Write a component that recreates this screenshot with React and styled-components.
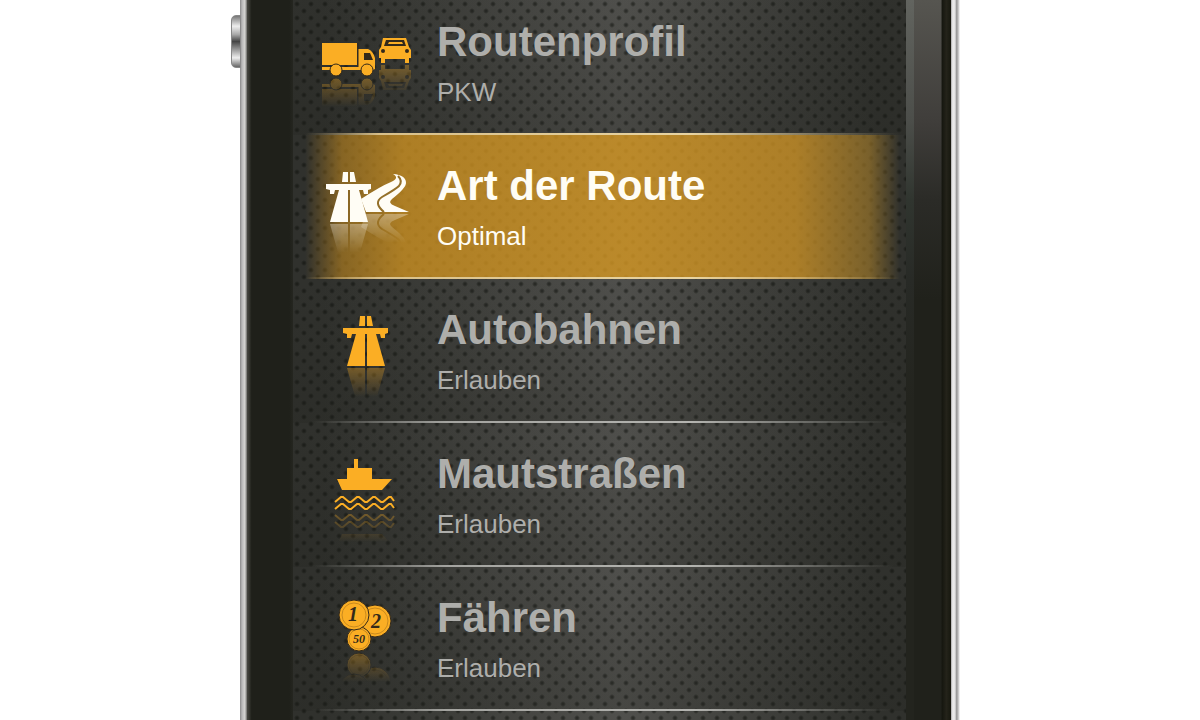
import React from "react";
import styled, { createGlobalStyle } from "styled-components";

const ORANGE = "#fbae24";
const DARK = "#33291a";

const Truck = () => (
	<g fill={ORANGE}>
		<path d="M1 20h35v22H1zM1 44h36V26h10q5 2 7 9v11l-2 1H1z" />
		<path d="M37 20v24" stroke={DARK} strokeWidth="1" />
		<path d="M43 30h6l3 7h-9z" fill={DARK} />
		<circle cx="15" cy="47" r="6" stroke={DARK} />
		<circle cx="46" cy="47" r="6" stroke={DARK} />
	</g>
);

const Car = () => (
	<g fill={ORANGE}>
		<path d="M62 15h23l3 9 2 3v8h-2v5h-4v-4H64v4h-4v-5h-2v-8l2-3z" />
		<path d="M65 17h18l2 6H63z" fill={DARK} />
		<path d="M68 19h13l1 2H67z" />
		<circle cx="62" cy="28" r="2" fill={DARK} />
		<circle cx="86" cy="28" r="2" fill={DARK} />
	</g>
);

const Motorway = () => (
	<>
		<path d="M17 0h5v10h-6zM24 0h4l2 10h-6z" />
		<path d="M0 12h45v5l-3 1v4h-4l-1-4H9l-1 4H4v-4l-4-1z" />
		<path d="M13 18h9v32H4zM24 18h9l9 32H24z" />
	</>
);

const WhiteMotorway = () => (
	<g fill="#fffdf5" transform="translate(5 5)">
		<Motorway />
	</g>
);

const OrangeMotorway = () => (
	<g fill={ORANGE} transform="translate(22 5)">
		<Motorway />
	</g>
);

const CountryRoad = () => (
	<>
		<path d="M72 7q13 1 13 9 0 5-14 16-5 4 3 7l14 6H45l-5-13q20-13 30-17 9-4 2-8z" fill="#fffdf5" />
		<path d="M77 9q5 5 1 10-3 3-17 11-9 6 2 15" fill="none" stroke="#94702a" strokeWidth="2" />
	</>
);

const Ship = () => (
	<g fill={ORANGE}>
		<path d="M26 24V13h7V4h4v9h14v11h20L61 35H21l-5-11z" />
		<path
			d="M14 47l6-5h2l6 5h2l6-5h2l6 5h2l6-5h2l6 5h2l6-5h2l3 4M14 54l6-5h2l6 5h2l6-5h2l6 5h2l6-5h2l6 5h2l6-5h2l3 4"
			fill="none"
			stroke={ORANGE}
			strokeWidth="2"
		/>
	</g>
);

const Coins = ({ mirrored }) => (
	<g
		fill={ORANGE}
		stroke={DARK}
		fontFamily="Liberation Serif, serif"
		fontStyle="italic"
		fontWeight="bold"
		textAnchor="middle"
	>
		<circle cx="54" cy="22" r="16" />
		<circle cx="54" cy="22" r="13" fill="none" stroke="#c98a1e" />
		<circle cx="38" cy="40" r="12" />
		<circle cx="38" cy="40" r="10" fill="none" stroke="#c98a1e" />
		<circle cx="33" cy="16" r="15" />
		<circle cx="33" cy="16" r="12" fill="none" stroke="#c98a1e" />
		{!mirrored && (
			<g fill={DARK} stroke="none">
				<text x="32" y="22" fontSize="20">1</text>
				<text x="55" y="29" fontSize="20">2</text>
				<text x="38" y="44" fontSize="12">50</text>
			</g>
		)}
	</g>
);

// base is the ground line of a drawing, its reflection starts there
const ITEMS = [
	{
		id: "profile",
		title: "Routenprofil",
		value: "PKW",
		parts: [
			{ draw: Truck, base: 54 },
			{ draw: Car, base: 41 },
		],
	},
	{
		id: "type",
		title: "Art der Route",
		value: "Optimal",
		parts: [
			{ draw: CountryRoad, base: 46 },
			{ draw: WhiteMotorway, base: 56 },
		],
	},
	{ id: "motorways", title: "Autobahnen", value: "Erlauben", parts: [{ draw: OrangeMotorway, base: 56 }] },
	{ id: "tolls", title: "Mautstraßen", value: "Erlauben", parts: [{ draw: Ship, base: 57 }] },
	{ id: "ferries", title: "Fähren", value: "Erlauben", parts: [{ draw: Coins, base: 53 }] },
];

const IconPart = ({ id, draw: Drawing, base }) => (
	<>
		<defs>
			<linearGradient id={`fade-${id}`} gradientUnits="userSpaceOnUse" x1="0" y1={base} x2="0" y2={base + 30}>
				<stop offset="0" stopColor="#fff" stopOpacity="0.35" />
				<stop offset="1" stopColor="#fff" stopOpacity="0" />
			</linearGradient>
			<mask id={`mirror-${id}`} maskUnits="userSpaceOnUse" x="0" y="0" width="92" height="96">
				<rect y={base} width="92" height="34" fill={`url(#fade-${id})`} />
			</mask>
		</defs>
		<g mask={`url(#mirror-${id})`}>
			<g transform={`translate(0 ${base * 2}) scale(1 -1)`}>
				<Drawing mirrored />
			</g>
		</g>
		<Drawing />
	</>
);

const App = () => {
	const [active, setActive] = React.useState("type");
	const activeIndex = ITEMS.findIndex((item) => item.id === active);
	return (
		<Page>
			<GlobalStyle />
			<Phone>
				<VolumeButton />
				<LeftRim />
				<LeftBezel />
				<Screen>
					<Menu>
						{ITEMS.map((item, index) => (
							<li key={item.id}>
								<Row
									$active={index === activeIndex}
									$brightLine={index === activeIndex || index === activeIndex - 1}
									onClick={() => setActive(item.id)}
								>
									<Icon viewBox="0 0 92 96" aria-hidden="true">
										{item.parts.map((part, i) => (
											<IconPart key={i} id={`${item.id}-${i}`} draw={part.draw} base={part.base} />
										))}
									</Icon>
									<Labels>
										<Title>{item.title}</Title>
										<Value>{item.value}</Value>
									</Labels>
								</Row>
							</li>
						))}
					</Menu>
				</Screen>
				<RightBezel />
				<RightRim />
			</Phone>
		</Page>
	);
};

const GlobalStyle = createGlobalStyle`
	* {
		box-sizing: border-box;
	}
	body {
		margin: 0;
		background: #fff;
		font-family: "Liberation Sans", Arial, sans-serif;
	}
`;

const Page = styled.main`
	height: 100vh;
	overflow: hidden;
`;

const Phone = styled.div`
	position: relative;
	display: grid;
	grid-template-columns: 8px 45px 1fr 45px 9px;
	width: 60%;
	min-width: 600px;
	height: 100%;
	margin: 0 auto;
`;

const VolumeButton = styled.div`
	position: absolute;
	top: 15px;
	left: -9px;
	width: 10px;
	height: 53px;
	border: 1px solid #888;
	border-radius: 5px 0 0 5px;
	background: linear-gradient(#777, #eee 20%, #aaa 36%, #444 50%, #999 66%, #eee 82%, #666);
`;

const LeftRim = styled.div`
	background: linear-gradient(90deg, #888, #b8b8b8 25%, #d5d5d2 60%, #8a8a86 80%, #22231d);
`;

const LeftBezel = styled.div`
	background: linear-gradient(90deg, #41423b, #1f201a 8%, #1f201a 92%, #252620);
`;

const RightBezel = styled.div`
	background:
		linear-gradient(90deg, transparent 78%, #15160f 80%, #24231a 90%, #17180f),
		linear-gradient(#62645f, #4c4e4a 120px, #30352f 200px, #282a26 280px, #23241e 400px) 0 0 / 8px 100% no-repeat,
		linear-gradient(#565550, #403e3b 120px, #2b2b27 200px, #20211b 300px);
`;

const RightRim = styled.div`
	background: linear-gradient(90deg, #aaa, #eee 20%, #e2e2e2 45%, #999 60%, #b0b0b0 75%, #fff);
`;

const Screen = styled.nav`
	overflow: hidden;
	background-color: #30312d;
	background-image:
		radial-gradient(circle at 4px 4px, rgba(12, 14, 10, 0.5) 1px, transparent 3px),
		radial-gradient(circle at 11px 11px, rgba(12, 14, 10, 0.5) 1px, transparent 3px),
		linear-gradient(90deg, transparent 5%, rgba(106, 105, 102, 0.55) 54%, transparent 95%);
	background-size: 14px 14px, 14px 14px, 100% 100%;
`;

const Menu = styled.ul`
	margin: -9px 0 0;
	padding: 0;
	list-style: none;
`;

const LINE = "linear-gradient(90deg, transparent 3%, #a4a4a0 25%, #b4b4b0 65%, transparent 98%)";
const BRIGHT_LINE = "linear-gradient(90deg, transparent 2%, #d8c08a 14%, #e8d4a2 65%, transparent 99%)";
const SHADE = "linear-gradient(transparent, rgba(30, 31, 26, 0.2))";
const GLOW = `linear-gradient(
	90deg,
	transparent 2%,
	rgba(180, 128, 30, 0.65) 8%,
	rgba(210, 148, 32, 0.76) 18%,
	rgba(214, 152, 34, 0.8) 55%,
	rgba(208, 148, 36, 0.76) 82%,
	rgba(170, 128, 42, 0.6) 94%,
	transparent 99%
)`;

const Row = styled.button`
	display: flex;
	align-items: flex-start;
	gap: 24px;
	width: 100%;
	height: 144px;
	padding: 27px 12px 0 28px;
	border: 0;
	font-family: inherit;
	text-align: left;
	cursor: pointer;
	color: ${(p) => (p.$active ? "#fffdf5" : "#aeaeab")};
	background:
		${(p) => (p.$brightLine ? BRIGHT_LINE : LINE)} bottom / 100% 2px no-repeat,
		${(p) => (p.$active ? GLOW : SHADE)};
`;

const Icon = styled.svg`
	flex: none;
	width: 92px;
	height: 96px;
	margin-top: 5px;
`;

const Labels = styled.span`
	display: flex;
	flex-direction: column;
`;

const Title = styled.span`
	font-size: 42px;
	line-height: 48px;
	font-weight: bold;
`;

const Value = styled.span`
	margin-top: 10px;
	font-size: 26px;
	line-height: 32px;
`;

export default App;
